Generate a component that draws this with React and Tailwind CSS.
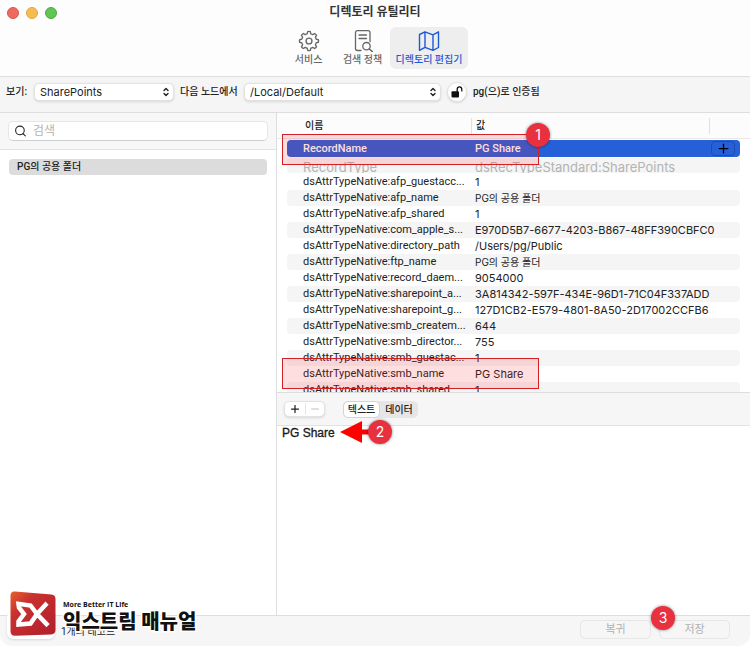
import React from "react";
import { Plus, Minus, Search } from "lucide-react";

const records = [
  ["dsAttrTypeNative:afp_guestacc...", "1"],
  ["dsAttrTypeNative:afp_name", "PG의 공용 폴더"],
  ["dsAttrTypeNative:afp_shared", "1"],
  ["dsAttrTypeNative:com_apple_s...", "E970D5B7-6677-4203-B867-48FF390CBFC0"],
  ["dsAttrTypeNative:directory_path", "/Users/pg/Public"],
  ["dsAttrTypeNative:ftp_name", "PG의 공용 폴더"],
  ["dsAttrTypeNative:record_daem...", "9054000"],
  ["dsAttrTypeNative:sharepoint_a...", "3A814342-597F-434E-96D1-71C04F337ADD"],
  ["dsAttrTypeNative:sharepoint_g...", "127D1CB2-E579-4801-8A50-2D17002CCFB6"],
  ["dsAttrTypeNative:smb_createm...", "644"],
  ["dsAttrTypeNative:smb_director...", "755"],
  ["dsAttrTypeNative:smb_guestac...", "1"],
  ["dsAttrTypeNative:smb_name", "PG Share"],
  ["dsAttrTypeNative:smb_shared", "1"],
];

const hasHangul = (text) => /[가-힣]/.test(text);

const GearGlyph = () => (
  <svg viewBox="0 0 24 24" className="h-[22px] w-[22px]" fill="none" stroke="currentColor" strokeWidth="1.5" strokeLinejoin="round" aria-hidden="true">
    <path d="M10 4.2 L10.6 1.8 Q12 1.3 13.4 1.8 L14 4.2 Q15.2 4.5 16.1 5.1 L18.2 3.8 Q19.5 4.5 20.2 5.8 L18.9 7.9 Q19.5 8.8 19.8 10 L22.2 10.6 Q22.7 12 22.2 13.4 L19.8 14 Q19.5 15.2 18.9 16.1 L20.2 18.2 Q19.5 19.5 18.2 20.2 L16.1 18.9 Q15.2 19.5 14 19.8 L13.4 22.2 Q12 22.7 10.6 22.2 L10 19.8 Q8.8 19.5 7.9 18.9 L5.8 20.2 Q4.5 19.5 3.8 18.2 L5.1 16.1 Q4.5 15.2 4.2 14 L1.8 13.4 Q1.3 12 1.8 10.6 L4.2 10 Q4.5 8.8 5.1 7.9 L3.8 5.8 Q4.5 4.5 5.8 3.8 L7.9 5.1 Q8.8 4.5 10 4.2Z" />
    <circle cx="12" cy="12" r="3.2" />
  </svg>
);

const PolicyGlyph = () => (
  <svg viewBox="0 0 22 22" className="h-[22px] w-[22px]" fill="none" stroke="currentColor" strokeWidth="1.3" strokeLinecap="round" aria-hidden="true">
    <path d="M9 20.500H5.500a2 2 0 0 1-2-2V2.700a2 2 0 0 1 2-2h10.500a2 2 0 0 1 2 2v9" />
    <path d="M7 5h7.500M7 8.500h7.500" />
    <circle cx="14.500" cy="16.200" r="3.700" />
    <path d="M17.300 19l3 2.500" strokeWidth="1.600" />
  </svg>
);

const MapGlyph = () => (
  <svg viewBox="0 0 22 22" className="h-[22px] w-[22px]" fill="none" stroke="currentColor" strokeWidth="1.4" strokeLinejoin="round" aria-hidden="true">
    <path d="M1.500 4.500 7 1.800l8 3 5.500-3v15.700L15 20.300l-8-3-5.500 3zM7 1.800v15.500M15 4.800v15.500" />
  </svg>
);

const UnlockGlyph = () => (
  <svg viewBox="0 0 14 14" className="h-[14px] w-[14px]" aria-hidden="true">
    <rect x="1.500" y="6.300" width="7.500" height="6.200" rx="1" fill="#111" />
    <path d="M7.200 6.500V4.200a2.300 2.300 0 0 1 4.600 0v1.700" fill="none" stroke="#111" strokeWidth="1.300" strokeLinecap="round" />
  </svg>
);

const PopupArrows = () => (
  <svg viewBox="0 0 8 10" className="pointer-events-none absolute right-1 top-1 h-[10px] w-2" fill="none" stroke="#222" strokeWidth="1.400" strokeLinecap="round" strokeLinejoin="round" aria-hidden="true">
    <path d="M2 3.500 4 1.500 6 3.500M2 6.500 4 8.500 6 6.500" />
  </svg>
);

const SiteLogo = () => (
  <svg viewBox="0 0 46 46" className="h-[46px] w-[46px] shrink-0" aria-hidden="true">
    <defs>
      <linearGradient id="logoRed" x1="0" y1="0" x2="1" y2="1">
        <stop offset="0" stopColor="#e8602c" />
        <stop offset="0.3" stopColor="#c9302f" />
        <stop offset="1" stopColor="#b01f2c" />
      </linearGradient>
    </defs>
    <path d="M5 0.500Q0.500 0 0.500 5V40Q0.500 45 5.500 44.700L41 43.500Q45.500 43 45.500 39V8Q45.500 4 41.500 3.600Z" fill="url(#logoRed)" />
    <path d="M27 23 20.500 14.500 8.500 12.800 9 16.500 14 23 8.500 30.500V33.500L20.500 32.500ZM27 23 35.500 13.800M27 23 36.500 33" fill="none" stroke="#fff" strokeWidth="4.500" strokeLinejoin="miter" strokeLinecap="square" />
  </svg>
);

const PopupSelect = ({ id, value, className }) => (
  <div className={`relative shrink-0 ${className}`}>
    <select
      id={id}
      defaultValue={value}
      className="block h-[18px] w-full appearance-none rounded-[5px] border border-[#e2e2e2] bg-white pl-[5px] pr-4 font-[Inter,sans-serif] text-[11px] leading-4 shadow-sm"
    >
      <option>{value}</option>
    </select>
    <PopupArrows />
  </div>
);

const ToolTab = ({ label, active, children }) => (
  <button
    className={`flex h-[42px] min-w-[54px] flex-col items-center rounded-md px-[6px] pt-[3px] text-[10px] leading-4 font-medium whitespace-nowrap ${
      active ? "bg-[#eeeeee] text-[#1f5ad6]" : "text-[#666]"
    }`}
  >
    {children}
    <span>{label}</span>
  </button>
);

const Step = ({ number, className }) => (
  <span
    className={`absolute z-20 flex h-6 w-6 items-center justify-center rounded-full bg-[#e8303f] font-[Inter,sans-serif] text-sm text-white shadow-[0_0_3px_rgba(0,0,0,0.5)] ${className}`}
  >
    {number}
  </span>
);

const Toolbar = () => (
  <header className="flex h-[77px] flex-col items-center border-b border-[#dedede] bg-[#fdfdfd]">
    <div className="relative flex w-full justify-center pt-1">
      <div className="absolute left-[7px] top-[7px] flex gap-[7px]">
        <span className="h-3 w-3 rounded-full border border-[#d9544d] bg-[#ee6a5f]" />
        <span className="h-3 w-3 rounded-full border border-[#dfa742] bg-[#f5bd4f]" />
        <span className="h-3 w-3 rounded-full border border-[#4cab3f] bg-[#61c454]" />
      </div>
      <h1 className="text-xs leading-4 font-bold text-[#333]">디렉토리 유틸리티</h1>
    </div>
    <nav className="mt-[7px] flex">
      <ToolTab label="서비스"><GearGlyph /></ToolTab>
      <ToolTab label="검색 정책"><PolicyGlyph /></ToolTab>
      <ToolTab label="디렉토리 편집기" active><MapGlyph /></ToolTab>
    </nav>
  </header>
);

const FilterBar = () => (
  <div className="flex h-9 items-center border-b border-[#dedede] bg-[#f5f5f5] px-[6px] pb-[6px] whitespace-nowrap">
    <label htmlFor="view" className="w-7 shrink-0 text-[10px] font-medium">보기:</label>
    <PopupSelect id="view" value="SharePoints" className="w-[140px]" />
    <label htmlFor="node" className="mx-[6px] w-[58px] shrink-0 text-[10px] font-medium">다음 노드에서</label>
    <PopupSelect id="node" value="/Local/Default" className="w-[197px]" />
    <button aria-label="잠금" className="mx-[6px] flex h-5 w-5 items-center justify-center rounded-full border border-[#e2e2e2] bg-white shadow-sm">
      <UnlockGlyph />
    </button>
    <span className="text-[10px] font-medium">pg(으)로 인증됨</span>
  </div>
);

const Sidebar = () => (
  <aside className="w-[277px] shrink-0 border-r border-[#dedede] bg-white">
    <div className="border-b border-[#e2e2e2] bg-[#f7f7f7] px-2 py-2">
      <label className="flex h-5 items-center gap-[6px] rounded-[5px] border border-[#e6e6e6] border-b-[#cfcfcf] bg-white px-[5px]">
        <Search size={14} strokeWidth={2} color="#222" />
        <input type="search" aria-label="검색" placeholder="검색" className="w-full text-xs outline-none placeholder:text-[#b5b5b5]" />
      </label>
    </div>
    <ul className="px-[9px] pt-[9px]">
      <li className="h-4 rounded bg-[#dcdcdc] px-2 text-[10px] leading-4 font-medium">PG의 공용 폴더</li>
    </ul>
  </aside>
);

const RecordTable = () => (
  <div className="relative h-[280px] border-b border-[#dedede] bg-white">
    <div className="h-full overflow-hidden">
      <table className="w-full table-fixed border-separate border-spacing-0">
        <colgroup>
          <col className="w-[194px]" />
          <col />
          <col className="w-[41px]" />
        </colgroup>
        <thead>
          <tr className="h-[26px] bg-[#fcfcfc] text-left text-[10px]">
            <th className="border-b border-[#e8e8e8] pl-7 font-medium">이름</th>
            <th className="border-b border-[#e8e8e8]"><div className="border-l border-[#e0e0e0] pl-1 font-medium">값</div></th>
            <th className="border-b border-[#e8e8e8]"><div className="h-4 border-l border-[#e0e0e0]" /></th>
          </tr>
        </thead>
      </table>
      <div className="pt-px pr-[10px] pl-[10px]">
        <table className="w-full table-fixed border-separate border-spacing-0 whitespace-nowrap">
          <colgroup>
            <col className="w-[184px]" />
            <col />
          </colgroup>
          <tbody>
            <tr className="h-[17px] bg-[#2660d8] font-medium text-white">
              <td className="rounded-l pl-4">RecordName</td>
              <td className="rounded-r pr-[5px] pl-1">
                <div className="flex items-center justify-between">
                  <span>PG Share</span>
                  <button aria-label="값 추가" className="flex h-[15px] w-6 items-center justify-center rounded border border-[#1d4cae] text-black">
                    <Plus size={15} strokeWidth={2} />
                  </button>
                </div>
              </td>
            </tr>
            <tr className="font-[Inter,sans-serif] text-[13px] text-[#b3b3b3]">
              <td className="py-px"><div className="h-[15px] overflow-hidden rounded-l bg-[#f5f5f5] pl-4 leading-[18px]">RecordType</div></td>
              <td className="py-px"><div className="h-[15px] overflow-hidden rounded-r bg-[#f5f5f5] pl-1 leading-[18px]">dsRecTypeStandard:SharePoints</div></td>
            </tr>
            {records.map(([name, value]) => (
              <tr key={name} className="h-4 odd:bg-white even:bg-[#f5f5f5]">
                <td className="rounded-l pl-4">{name}</td>
                <td
                  className={`rounded-r pl-1 font-[Inter,'Noto_Sans_CJK_KR',sans-serif] ${
                    hasHangul(value) ? "text-[10px]" : ""
                  }`}
                >
                  {value}
                </td>
              </tr>
            ))}
          </tbody>
        </table>
      </div>
    </div>
    <div className="pointer-events-none absolute top-[21px] left-[5px] h-[31px] w-[257px] border border-[#d32026] bg-[#ff2030]/15" />
    <div className="pointer-events-none absolute top-[245px] left-[5px] h-[31px] w-[257px] border border-[#d32026] bg-[#ff2030]/15" />
    <Step number={1} className="top-[10px] left-[249px]" />
  </div>
);

const ValueEditor = () => (
  <div className="flex flex-1 flex-col">
    <div className="flex h-[33px] items-center gap-[18px] border-b border-[#e2e2e2] bg-[#f6f6f6] pl-[7px]">
      <div className="flex h-4 items-center rounded-[5px] border border-[#e2e2e2] bg-white shadow-sm">
        <button aria-label="추가" className="flex w-5 justify-center"><Plus size={12} strokeWidth={2.5} /></button>
        <button aria-label="제거" disabled className="flex w-[19px] justify-center border-l border-[#e5e5e5] text-[#c0c0c0]"><Minus size={12} strokeWidth={2} /></button>
      </div>
      <div className="flex h-[17px] items-center rounded-[5px] bg-[#e6e6e6] text-[10px]">
        <button className="h-[17px] w-[37px] rounded-[5px] border border-[#d4d4d4] bg-white leading-[15px] font-medium">텍스트</button>
        <button className="h-[17px] w-[38px] leading-[15px] font-medium">데이터</button>
      </div>
    </div>
    <div className="relative flex flex-1 bg-white">
      <textarea
        aria-label="값"
        defaultValue="PG Share"
        className="w-full resize-none px-[5px] font-['Liberation_Sans','Noto_Sans_CJK_KR',sans-serif] text-xs leading-[14px] outline-none [-webkit-text-stroke:0.3px_#111]"
      />
      <svg viewBox="0 0 36 22" className="absolute -top-[5px] left-[63px] h-[22px] w-9" aria-hidden="true">
        <path d="M0 11 22 0v8.500h14v5H22V22z" fill="#ff0000" />
      </svg>
      <Step number={2} className="-top-[6px] left-[91px]" />
    </div>
  </div>
);

const Footer = () => (
  <footer className="relative flex h-[31px] items-start justify-end gap-2 rounded-b-xl border-t border-[#dedede] bg-[#f6f6f6] pt-1 pr-5">
    <span className="absolute bottom-[7px] left-[7px] h-7 w-12 rounded-md bg-white shadow" />
    <span className="absolute top-2 left-[61px] text-[10px]">1개의 레코드</span>
    <div className="absolute bottom-[9px] left-[10px] flex items-end gap-[7px]">
      <SiteLogo />
      <div className="font-['Noto_Sans_CJK_KR',sans-serif] whitespace-nowrap text-[#111] [-webkit-text-stroke:3px_white] [paint-order:stroke_fill]">
        <p className="font-['Open_Sans',sans-serif] text-[7px] leading-[8px] font-bold [-webkit-text-stroke:2px_white]">More Better IT Life</p>
        <p className="mb-1 text-xl leading-6 font-black">익스트림 매뉴얼</p>
      </div>
    </div>
    <button disabled className="h-[19px] w-[71px] rounded-[5px] border border-[#e6e6e6] text-[#b0b0b0]">복귀</button>
    <button disabled className="h-[19px] w-[71px] rounded-[5px] border border-[#e6e6e6] text-[#b0b0b0]">저장</button>
    <Step number={3} className="-top-[10px] right-[75px]" />
  </footer>
);

export default function App() {
  return (
    <div className="flex min-h-screen flex-col bg-white font-[Roboto,'Noto_Sans_CJK_KR',sans-serif] text-[11px] leading-4 text-[#222]">
      <Toolbar />
      <FilterBar />
      <div className="flex flex-1">
        <Sidebar />
        <main className="flex min-w-0 flex-1 flex-col">
          <RecordTable />
          <ValueEditor />
        </main>
      </div>
      <Footer />
    </div>
  );
}
